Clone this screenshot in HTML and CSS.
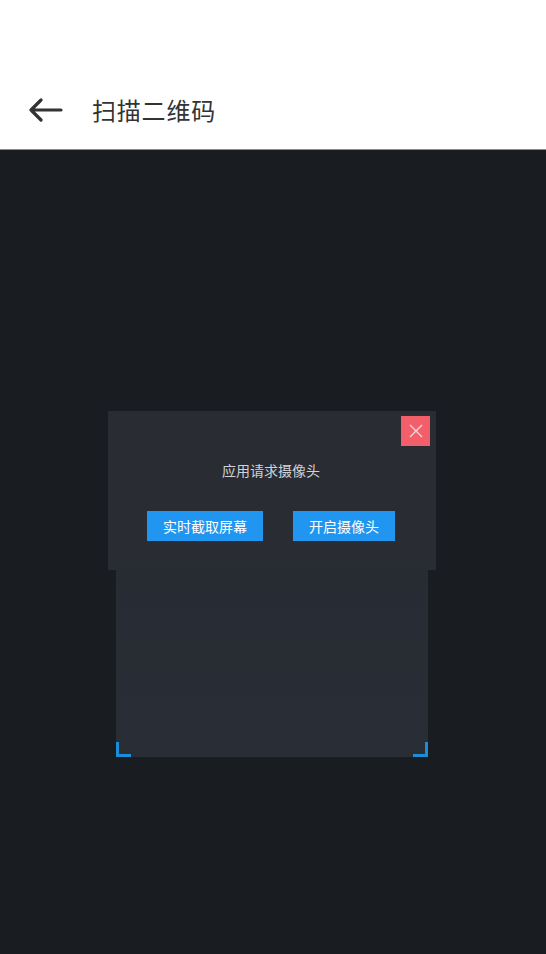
FILE: index.html
```html
<!DOCTYPE html>
<html lang="zh">
<head>
<meta charset="utf-8">
<link rel="stylesheet" href="styles.css">
</head>
<body>
<div class="app">
  <header class="topbar">
    <svg class="back" width="36" height="24" viewBox="0 0 36 24">
      <path d="M34 12H4M14 2L4 12l10 10" fill="none" stroke="#333" stroke-width="3.2" stroke-linecap="round" stroke-linejoin="round"/>
    </svg>
    <h1 class="title">扫描二维码</h1>
  </header>
  <main class="stage">
    <div class="frame">
      <span class="corner bl"></span>
      <span class="corner br"></span>
      <div class="dialog">
        <button class="close" aria-label="close">
          <svg width="16" height="16" viewBox="0 0 16 16"><path d="M2 2L14 14M14 2L2 14" stroke="#f7d7da" stroke-width="1.4"/></svg>
        </button>
        <p class="msg">应用请求摄像头</p>
        <div class="actions">
          <button class="btn wide">实时截取屏幕</button>
          <button class="btn">开启摄像头</button>
        </div>
      </div>
    </div>
  </main>
</div>
</body>
</html>
```
FILE: styles.css
```css
* { box-sizing: border-box; }
html, body { margin: 0; padding: 0; }
body {
  font-family: "Noto Sans CJK SC", "Noto Sans", sans-serif;
  background: #191c20;
}
.app {
  width: 546px;
  height: 954px;
  display: flex;
  flex-direction: column;
}
.topbar {
  height: 150px;
  background: #fff;
  display: flex;
  align-items: center;
  padding: 70px 0 0 27px;
  border-bottom: 1px solid #8a8d90;
}
.back { display: block; }
.title {
  margin: 0 0 0 29px;
  font-size: 24px;
  font-weight: 400;
  color: #333;
  letter-spacing: 0.8px;
  line-height: 1;
}
.stage {
  flex: 1;
  background: #191c20;
  padding: 295px 0 0 116px;
}
.frame {
  position: relative;
  width: 312px;
  height: 312px;
  background: linear-gradient(180deg, #262a31, #292d35);
}
.corner {
  position: absolute;
  width: 15px;
  height: 15px;
  bottom: 0;
}
.corner.bl { left: 0; border-left: 3px solid #1a8cd8; border-bottom: 3px solid #1a8cd8; }
.corner.br { right: 0; border-right: 3px solid #1a8cd8; border-bottom: 3px solid #1a8cd8; }
.dialog {
  position: absolute;
  left: -8px;
  top: -34px;
  width: 328px;
  height: 159px;
  background: #2a2c33;
  display: flex;
  flex-direction: column;
  align-items: center;
  padding: 49px 2px 0 0;
}
.close {
  position: absolute;
  right: 6px;
  top: 5px;
  width: 29px;
  height: 30px;
  border: 0;
  padding: 0;
  background: #f25e6a;
  display: flex;
  align-items: center;
  justify-content: center;
}
.msg {
  margin: 0;
  font-size: 14px;
  line-height: 20px;
  color: #d0d2d6;
}
.actions {
  margin-top: 31px;
  display: flex;
  gap: 30px;
}
.btn {
  height: 30px;
  width: 102px;
  border: 0;
  padding: 0;
  background: #2196f0;
  color: #fff;
  font-family: "Noto Sans CJK SC", sans-serif;
  font-size: 14px;
}
.btn.wide { width: 116px; }
```
